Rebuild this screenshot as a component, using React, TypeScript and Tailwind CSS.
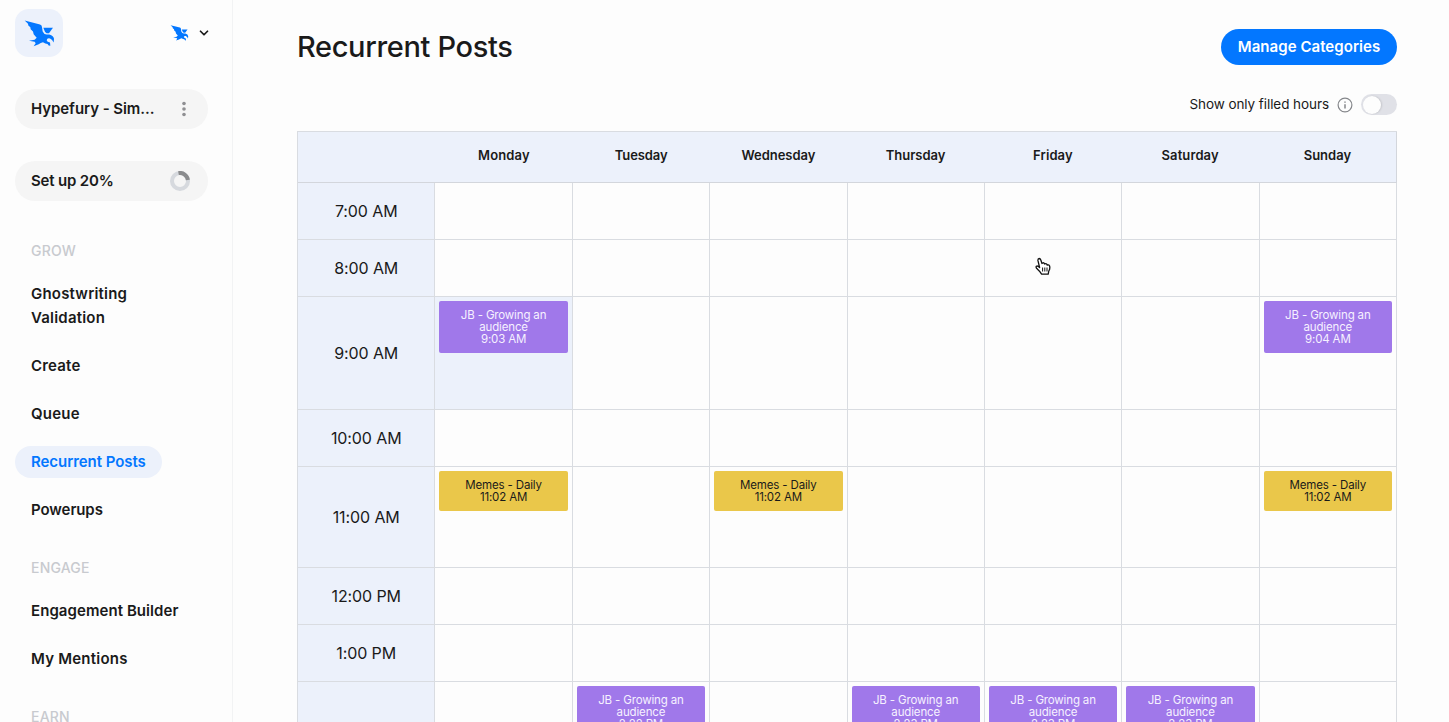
import React from "react";
import { ChevronDown } from "lucide-react";

type Category = "audience" | "memes";

interface Slot {
  category: Category;
  time: string;
}

interface HourRow {
  label: string;
  height: string;
  // keyed by day index, Monday = 0
  slots?: Record<number, Slot>;
  hovered?: number;
}

const DAYS = [
  { name: "Monday", tracking: "tracking-[0.13px]" },
  { name: "Tuesday", tracking: "tracking-[-0.1px]" },
  { name: "Wednesday", tracking: "tracking-[-0.03px]" },
  { name: "Thursday", tracking: "tracking-[0px]" },
  { name: "Friday", tracking: "tracking-[0.08px]" },
  { name: "Saturday", tracking: "tracking-[0.1px]" },
  { name: "Sunday", tracking: "tracking-[0px]" },
];

const HOURS: HourRow[] = [
  { label: "7:00 AM", height: "h-[57px]" },
  { label: "8:00 AM", height: "h-[57px]" },
  {
    label: "9:00 AM",
    height: "h-[113px]",
    hovered: 0,
    slots: {
      0: { category: "audience", time: "9:03 AM" },
      6: { category: "audience", time: "9:04 AM" },
    },
  },
  { label: "10:00 AM", height: "h-[57px]" },
  {
    label: "11:00 AM",
    height: "h-[101px]",
    slots: {
      0: { category: "memes", time: "11:02 AM" },
      2: { category: "memes", time: "11:02 AM" },
      6: { category: "memes", time: "11:02 AM" },
    },
  },
  { label: "12:00 PM", height: "h-[57px]" },
  { label: "1:00 PM", height: "h-[57px]" },
  {
    label: "",
    height: "h-[113px]",
    slots: {
      1: { category: "audience", time: "2:22 PM" },
      3: { category: "audience", time: "2:23 PM" },
      4: { category: "audience", time: "2:23 PM" },
      5: { category: "audience", time: "2:23 PM" },
    },
  },
];

interface NavItem {
  label: string;
  className: string;
}

const NAV: { title: string; items: NavItem[] }[] = [
  {
    title: "GROW",
    items: [
      { label: "Ghostwriting Validation", className: "w-[150px] tracking-[0.2px]" },
      { label: "Create", className: "tracking-[0.2px]" },
      { label: "Queue", className: "tracking-[0.2px]" },
      { label: "Recurrent Posts", className: "tracking-[-0.06px] bg-[#ecf1fb] text-[#0377ff]" },
      { label: "Powerups", className: "tracking-[-0.08px]" },
    ],
  },
  {
    title: "ENGAGE",
    items: [
      { label: "Engagement Builder", className: "tracking-[0.07px]" },
      { label: "My Mentions", className: "tracking-[0.22px]" },
    ],
  },
  { title: "EARN", items: [] },
];

function Bird({ className }: { className?: string }) {
  return (
    <svg viewBox="6 10 93 80" className={className} fill="#0377ff">
      <path d="M8 11 L54 23 Q60 25 60 31 L62 44 Q66 53 74 53 L82 53 Q95 57 96 66 L95 77 Q91 68 84 65 Q75 63 74 70 Q75 75 84 77 L85 87 L80 86 Q78 80 70 80 L63 76 Q56 77 50 82 L35 88 L41 79 L38 75 L21 72 L38 69 L44 63 L35 52 L33 44 L26 37 L25 31 L19 26 L18 21 Z" />
      <path d="M64 33 L93 33 L89 38 L81 49 L74 49 Q68 46 67 40 Z" />
    </svg>
  );
}

function EventCard({ slot }: { slot: Slot }) {
  if (slot.category === "memes") {
    return (
      <div className="rounded-[2px] bg-[#eac74a] px-4 py-2 text-center text-[11.5px] leading-3 tracking-[-0.15px] text-[#1a1a1a]">
        <div>Memes - Daily</div>
        <div>{slot.time}</div>
      </div>
    );
  }
  return (
    <div className="rounded-[2px] bg-[#a078ea] px-4 py-2 text-center text-[11.5px] leading-3 tracking-[-0.15px] text-[#f6f1ff]">
      <div>JB - Growing an audience</div>
      <div>{slot.time}</div>
    </div>
  );
}

function Sidebar() {
  return (
    <aside className="h-full w-[233px] shrink-0 border-r border-[#f2f3f4] pt-[9px] pl-[15px]">
      <div className="flex h-12 w-[194px] items-center justify-between">
        <div className="flex size-12 items-center justify-center rounded-[14px] bg-[#ecf1fb]">
          <Bird className="h-[27px] w-[31px]" />
        </div>
        <div className="flex items-center gap-2">
          <Bird className="h-4 w-[19px]" />
          <ChevronDown size={14} strokeWidth={3} className="-mr-0.5 text-[#1a1a1a]" />
        </div>
      </div>

      <div className="mt-8 flex h-10 w-[193px] items-center justify-between rounded-full bg-[#f5f5f5] pr-[21px] pl-4">
        <span className="text-[15px] font-semibold tracking-[-0.06px]">Hypefury - Sim...</span>
        <svg viewBox="0 0 6 16" className="h-4 w-1.5" fill="#8f8f92">
          <circle cx="3" cy="2.5" r="1.8" />
          <circle cx="3" cy="8" r="1.8" />
          <circle cx="3" cy="13.5" r="1.8" />
        </svg>
      </div>

      <div className="mt-8 flex h-10 w-[193px] items-center justify-between rounded-full bg-[#f5f5f5] pr-[18px] pl-4">
        <span className="text-[15px] font-semibold tracking-[-0.18px]">Set up 20%</span>
        <svg viewBox="0 0 20 20" className="size-5" fill="none" strokeWidth="4">
          <circle cx="10" cy="10" r="8" stroke="#d6d9de" />
          <path d="M8.5 2.1 A8 8 0 0 1 17.9 9" stroke="#8a8b8d" />
        </svg>
      </div>

      <nav className="mt-2">
        {NAV.map((group) => (
          <div key={group.title} className="pt-8">
            <h3 className="mb-[17px] pl-4 text-sm leading-5 font-medium tracking-[0.2px] text-[#c8cacf]">
              {group.title}
            </h3>
            <div className="flex flex-col items-start gap-4">
              {group.items.map((item) => (
                <a key={item.label} className={`rounded-full px-4 py-1 text-[15px] font-semibold ${item.className}`}>
                  {item.label}
                </a>
              ))}
            </div>
          </div>
        ))}
      </nav>
    </aside>
  );
}

function Calendar() {
  return (
    <div className="w-[1100px] border-t border-l border-[#d9dce1] text-[#1a1a1a]">
      <div className="grid h-[51px] grid-cols-8 border-r border-b border-[#d3d6dc] bg-[#ecf1fb] pt-[13px]">
        <div />
        {DAYS.map((day) => (
          <div key={day.name} className={`text-center text-[13px] leading-5 font-semibold ${day.tracking}`}>
            {day.name}
          </div>
        ))}
      </div>
      {HOURS.map((row) => (
        <div key={row.label} className={`grid grid-cols-8 ${row.height}`}>
          <div className="flex items-center justify-center border-r border-b border-[#d9dce1] bg-[#ecf1fb] pb-px tracking-[-0.1px]">
            {row.label}
          </div>
          {DAYS.map((day, i) => (
            <div
              key={day.name}
              className={`border-r border-b border-[#d9dce1] p-1 ${row.hovered === i ? "bg-[#ecf1fb]" : ""}`}
            >
              {row.slots?.[i] && <EventCard slot={row.slots[i]} />}
            </div>
          ))}
        </div>
      ))}
    </div>
  );
}

function HandCursor() {
  return (
    <svg viewBox="0 0 17 19" className="absolute top-[257px] left-[1035px] h-[19px] w-[17px]">
      <path
        d="M4.6 10.5 L2.9 3.4 Q2.8 1.6 4.2 1.5 Q5.3 1.6 5.8 3 L7 6.5 Q7.8 5.2 9.3 6.2 L9.6 7 Q10.8 6 12 7.4 L12.2 8.2 Q13.8 7.4 14.6 9 Q15.3 11.8 13.8 14 L13.2 17.2 L6.6 17.2 Q5 14.5 1.8 11.6 Q0.6 10 1.4 9.2 Q2.6 8.5 4.6 10.5 Z"
        fill="#fff"
        stroke="#111"
        strokeWidth="1.3"
        strokeLinejoin="round"
      />
      <path d="M7.6 10.5 V14.5 M9.8 10.5 V14.5 M12 10.5 V14.5" stroke="#111" strokeWidth="1" fill="none" />
    </svg>
  );
}

export default function App() {
  return (
    <div className="relative flex h-[722px] w-[1449px] overflow-hidden bg-[#fdfdfd] font-['Inter',sans-serif] text-base leading-6 text-[#1a1a1a]">
      <Sidebar />
      <main className="pt-[29px] pl-16">
        <header className="flex h-9 w-[1100px] items-center justify-between">
          <h1 className="text-[29px] leading-9 font-medium tracking-[-0.35px]">Recurrent Posts</h1>
          <button className="h-9 w-44 rounded-full bg-[#0377ff] text-center text-[15px] font-semibold tracking-[0.05px] text-white">
            Manage Categories
          </button>
        </header>
        <div className="mt-[29px] mb-4 flex h-[21px] w-[1100px] items-center justify-end">
          <span className="pb-px text-[13.5px] tracking-[-0.07px]">Show only filled hours</span>
          <svg viewBox="0 0 16 16" className="mr-2 ml-2 size-4" fill="none" stroke="#85878b" strokeWidth="1.2">
            <circle cx="8" cy="8" r="6.9" />
            <path d="M8 7.2 V11.4 M8 4.4 V5.8" strokeWidth="1.5" />
          </svg>
          <div className="flex h-[21px] w-9 items-center rounded-full bg-[#e0e1e7] pl-[1.5px]">
            <div className="size-[18px] rounded-full bg-[#fdfdfd] shadow-[1px_0_2px_rgba(0,0,0,0.12)]" />
          </div>
        </div>
        <Calendar />
      </main>
      <HandCursor />
    </div>
  );
}
